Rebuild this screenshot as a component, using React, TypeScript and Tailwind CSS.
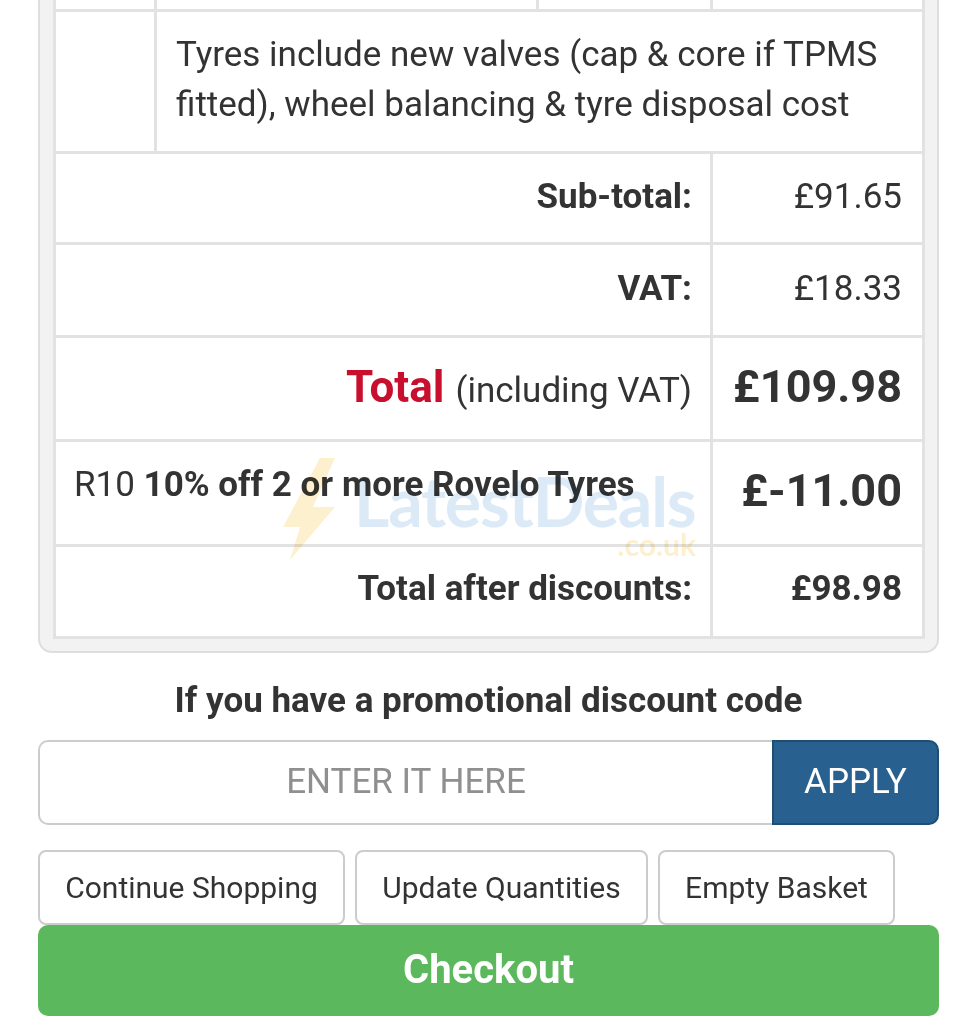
import React from 'react';

const label = "flex flex-1 items-center justify-end pl-5 pr-[18px]";
const cell = "flex w-[212px] items-center justify-end border-l-[3px] border-[#e2e2e2] px-5";
const line = "border-[#e2e2e2]";

const App = () => {
  return (
    <div className="relative h-[1024px] w-[977px] overflow-hidden bg-white text-[#333333] [font-family:Roboto,sans-serif]">
      <div className="ml-[38px] w-[901px]">
        {/* Basket panel */}
        <div className="rounded-b-[14px] border-x-[2px] border-b-[2px] border-[#dedede] bg-[#f2f2f2] pb-[12px] pl-[13px] pr-[12px]">
          <div className={`border-x-[3px] border-b-[3px] ${line} bg-white`}>
            {/* Clipped row */}
            <div className={`flex h-[12px] border-b-[3px] ${line}`}>
              <div className={`w-[101px] border-r-[3px] ${line}`} />
              <div className={`w-[382px] border-r-[3px] ${line}`} />
              <div className={`w-[174px] border-r-[3px] ${line}`} />
            </div>
            {/* Tyres note */}
            <div className={`flex h-[142px] border-b-[3px] ${line}`}>
              <div className={`w-[101px] border-r-[3px] ${line}`} />
              <div className="flex-1 pl-[19px] pt-[18px] text-[35px] leading-[50px] whitespace-nowrap">
                Tyres include new valves (cap &amp; core if TPMS
                <br />
                fitted), wheel balancing &amp; tyre disposal cost
              </div>
            </div>
            {/* Sub-total */}
            <div className={`flex h-[91px] border-b-[3px] ${line}`}>
              <div className={`${label} pb-[2px] text-[35px] font-bold`}>Sub-total:</div>
              <div className={`${cell} pb-[2px] text-[35px]`}>£91.65</div>
            </div>
            {/* VAT */}
            <div className={`flex h-[93px] border-b-[3px] ${line}`}>
              <div className={`${label} pb-[2px] text-[35px] font-bold`}>VAT:</div>
              <div className={`${cell} pb-[2px] text-[35px]`}>£18.33</div>
            </div>
            {/* Total */}
            <div className={`flex h-[104px] border-b-[3px] ${line}`}>
              <div className={`${label} pb-[4px]`}>
                <p className="text-[35px]">
                  <span className="text-[44px] font-bold text-[#c8102e]">Total</span>
                  <span className="ml-[11px]">(including VAT)</span>
                </p>
              </div>
              <div className={`${cell} pb-[4px] text-[45px] font-bold`}>£109.98</div>
            </div>
            {/* Discount */}
            <div className={`flex h-[105px] border-b-[3px] ${line}`}>
              <div className="flex flex-1 items-center px-[18px] pb-[15px] text-[35px]">
                R10&nbsp;<span className="font-bold">10% off 2 or more Rovelo Tyres</span>
              </div>
              <div className={`${cell} pb-[4px] text-[45px] font-bold`}>£-11.00</div>
            </div>
            {/* After discounts */}
            <div className="flex h-[89px]">
              <div className={`${label} pb-[4px] text-[35px] font-bold`}>Total after discounts:</div>
              <div className={`${cell} pb-[4px] text-[35px] font-bold`}>£98.98</div>
            </div>
          </div>
        </div>

        {/* Promo code */}
        <p className="mt-[26px] text-center text-[35px] font-bold leading-[44px]">If you have a promotional discount code</p>
        <div className="mt-[17px] flex h-[85px]">
          <div className="flex flex-1 items-center justify-center rounded-l-[10px] border-y-[2px] border-l-[2px] border-[#cccccc] bg-white text-[35px] text-[#8f8f8f]">
            ENTER IT HERE
          </div>
          <button className="w-[167px] rounded-r-[10px] border-[2px] border-[#204d74] bg-[#28608f] text-[35px] text-white">APPLY</button>
        </div>

        {/* Basket actions */}
        <div className="mt-[25px] flex gap-[10px]">
          <button className="h-[75px] w-[307px] rounded-[8px] border-[2px] border-[#cccccc] bg-white text-[30px]">Continue Shopping</button>
          <button className="h-[75px] w-[293px] rounded-[8px] border-[2px] border-[#cccccc] bg-white text-[30px]">Update Quantities</button>
          <button className="h-[75px] w-[237px] rounded-[8px] border-[2px] border-[#cccccc] bg-white text-[30px]">Empty Basket</button>
        </div>
        <button className="block h-[91px] w-full rounded-[10px] bg-[#5cb85c] pb-[2px] text-[40px] font-bold text-white">Checkout</button>
      </div>

      {/* Watermark */}
      <div className="pointer-events-none absolute left-[283px] top-[458px] flex mix-blend-multiply">
        <svg width="52" height="102" viewBox="0 0 52 102" className="fill-[#fdf0cf]">
          <path d="M37 0 L52 0 L30 49 L52 49 L7 102 L17 69 L0 69 Z" />
        </svg>
        <div className="relative ml-[22px] h-[102px] w-[338px] [font-family:Lato,sans-serif]">
          <span className="absolute -left-[3px] top-[3px] whitespace-nowrap text-[68px] font-bold leading-[80px] tracking-[-1.2px] text-[#dbeaf6]">LatestDeals</span>
          <span className="absolute -right-[1px] top-[72px] whitespace-nowrap text-[30px] font-bold leading-[28px] text-[#fdf0cf]">.co.uk</span>
        </div>
      </div>
    </div>
  );
};

export default App;
